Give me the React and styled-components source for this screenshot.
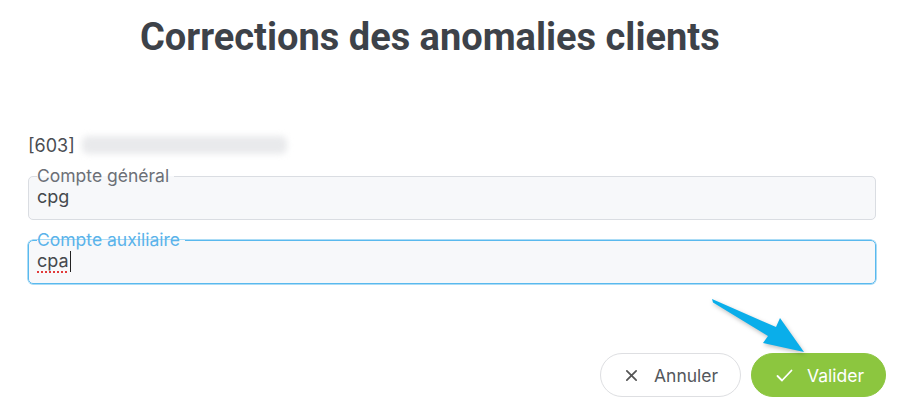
import React from "react";
import styled, { createGlobalStyle } from "styled-components";

const Global = createGlobalStyle`
  html, body { margin: 0; padding: 0; background: #ffffff; }
  body { font-family: Inter, "Noto Sans", sans-serif; }
`;

const Page = styled.div`
  position: relative;
  width: 906px;
  height: 405px;
  box-sizing: border-box;
  padding: 15px 30px 0 28px;
  overflow: hidden;
`;

const Title = styled.h1`
  margin: 0 0 0 112px;
  font-family: Roboto, "Liberation Sans", sans-serif;
  font-weight: 700;
  font-size: 38px;
  line-height: 44px;
  color: #3d4249;
`;

const RefRow = styled.div`
  margin-top: 74px;
  display: flex;
  align-items: center;
  gap: 7px;
  height: 24px;
  font-size: 18px;
  color: #4a4d52;
`;

const Blurred = styled.div`
  width: 205px;
  height: 18px;
  border-radius: 6px;
  background: #e9eaec;
  filter: blur(3px);
`;

const Fields = styled.div`
  margin-top: 9px;
  display: flex;
  flex-direction: column;
  gap: 10px;
`;

const Field = styled.fieldset`
  margin: 0;
  padding: 0 8px 11px 8px;
  min-width: 0;
  border: 1px solid ${(p) => (p.$focused ? "#59b9ee" : "#dadde2")};
  border-radius: 5px;
  background: #f7f8fa;
  ${(p) => (p.$focused ? "box-shadow: 0 0 0 0.5px #59b9ee;" : "")}
`;

const Legend = styled.legend`
  padding: 0 5px 0 0;
  font-size: 17.5px;
  line-height: 20px;
  color: ${(p) => (p.$focused ? "#5ab3ea" : "#6c7077")};
`;

const Value = styled.div`
  font-size: 18px;
  line-height: 22px;
  color: #45484d;
  display: flex;
  align-items: center;
`;

const Misspelled = styled.span`
  text-decoration: underline dotted #e23b3b;
  text-decoration-thickness: 2px;
  text-underline-offset: 4px;
`;

const Caret = styled.span`
  display: inline-block;
  width: 1px;
  height: 21px;
  background: #222;
  margin-left: 1px;
`;

const Footer = styled.div`
  margin-top: 69px;
  display: flex;
  justify-content: flex-end;
  gap: 10px;
  margin-right: -10px;
`;

const Button = styled.button`
  height: 44px;
  box-sizing: border-box;
  border-radius: 22px;
  display: flex;
  align-items: center;
  gap: ${(p) => (p.$primary ? "14px" : "16px")};
  font-family: Inter, Roboto, sans-serif;
  font-size: 17.5px;
  cursor: pointer;
  padding: 0 0 0 ${(p) => (p.$primary ? "24px" : "24px")};
  border: 1px solid ${(p) => (p.$primary ? "#8cc63f" : "#dedfe2")};
  background: ${(p) => (p.$primary ? "#8cc63f" : "#ffffff")};
  color: ${(p) => (p.$primary ? "#ffffff" : "#54575c")};
  width: ${(p) => p.$w}px;
`;

const Arrow = styled.svg`
  position: absolute;
  left: 700px;
  top: 290px;
  width: 120px;
  height: 75px;
  filter: drop-shadow(1px 2px 2px rgba(0, 0, 0, 0.25));
`;

export default function App() {
  return (
    <>
      <Global />
      <Page>
        <Title>Corrections des anomalies clients</Title>
        <RefRow>
          <span>[603]</span>
          <Blurred />
        </RefRow>
        <Fields>
          <Field>
            <Legend>Compte général</Legend>
            <Value>cpg</Value>
          </Field>
          <Field $focused>
            <Legend $focused>Compte auxiliaire</Legend>
            <Value>
              <Misspelled>cpa</Misspelled>
              <Caret />
            </Value>
          </Field>
        </Fields>
        <Footer>
          <Button $w={141}>
            <svg width="13" height="13" viewBox="0 0 14 14">
              <path d="M2 2 L12 12 M12 2 L2 12" stroke="#555" strokeWidth="1.9" strokeLinecap="round" />
            </svg>
            Annuler
          </Button>
          <Button $primary $w={135}>
            <svg width="17" height="13" viewBox="0 0 17 13">
              <path d="M1.5 7 L6 11.5 L15.5 1.5" fill="none" stroke="#fff" strokeWidth="1.8" strokeLinecap="round" strokeLinejoin="round" />
            </svg>
            Valider
          </Button>
        </Footer>
        <Arrow viewBox="0 0 120 75">
          <path d="M12 9 L13 12.5 L68 46 L63 53 L104 62 L80 28 L76 37 Z" fill="#0aaeea" />
        </Arrow>
      </Page>
    </>
  );
}
